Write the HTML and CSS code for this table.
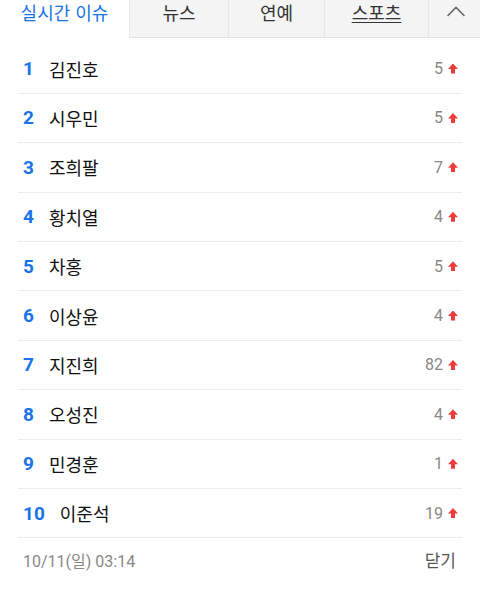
FILE: index.html
```html
<!DOCTYPE html>
<html lang="ko">
<head>
  <meta charset="UTF-8">
  <title>실시간 이슈</title>
  <link rel="stylesheet" href="styles.css">
</head>
<body>
  <div class="tabs">
    <div class="tab active">실시간 이슈</div>
    <div class="tab t-news">뉴스</div>
    <div class="tab t-ent">연예</div>
    <div class="tab t-sport"><span class="under">스포츠</span></div>
    <div class="tab t-fold">
      <svg width="20" height="11" viewBox="0 0 20 11"><polyline points="1.5,10 10,1.5 18.5,10" fill="none" stroke="#666" stroke-width="1.6"/></svg>
    </div>
  </div>

  <ul class="ranks">
    <li><span class="num">1</span><span class="name">김진호</span><span class="cnt">5</span><span class="up"></span></li>
    <li><span class="num">2</span><span class="name">시우민</span><span class="cnt">5</span><span class="up"></span></li>
    <li><span class="num">3</span><span class="name">조희팔</span><span class="cnt">7</span><span class="up"></span></li>
    <li><span class="num">4</span><span class="name">황치열</span><span class="cnt">4</span><span class="up"></span></li>
    <li><span class="num">5</span><span class="name">차홍</span><span class="cnt">5</span><span class="up"></span></li>
    <li><span class="num">6</span><span class="name">이상윤</span><span class="cnt">4</span><span class="up"></span></li>
    <li><span class="num">7</span><span class="name">지진희</span><span class="cnt">82</span><span class="up"></span></li>
    <li><span class="num">8</span><span class="name">오성진</span><span class="cnt">4</span><span class="up"></span></li>
    <li><span class="num">9</span><span class="name">민경훈</span><span class="cnt">1</span><span class="up"></span></li>
    <li><span class="num">10</span><span class="name">이준석</span><span class="cnt">19</span><span class="up"></span></li>
  </ul>

  <div class="foot">
    <span class="date">10/11(일) 03:14</span>
    <span class="close">닫기</span>
  </div>
</body>
</html>
```

FILE: styles.css
```css
body {
  margin: 0;
  font-family: "Noto Sans CJK KR", "Noto Sans", Roboto, sans-serif;
  background: #fff;
  color: #111;
}
.tabs {
  display: flex;
  height: 38px;
}
.tab {
  box-sizing: border-box;
  height: 38px;
  line-height: 24px;
  text-align: center;
  font-size: 18px;
  color: #333;
  background: #f4f4f4;
  border-left: 1px solid #e6e6e6;
  border-bottom: 1px solid #e2e2e2;
}
.tab.active {
  width: 129px;
  background: #fff;
  color: #1a73e8;
  border-left: none;
  border-bottom: none;
}
.t-news { width: 99px; }
.t-ent { width: 96px; }
.t-sport { width: 104px; }
.t-fold {
  width: 52px;
  display: flex;
  justify-content: center;
  padding-top: 6px;
  padding-left: 3px;
}
.under {
  text-decoration: underline;
  text-underline-offset: 2px;
  text-decoration-thickness: 1px;
}
.ranks {
  list-style: none;
  margin: 0 18px;
  padding: 6.4px 0 0;
}
.ranks li {
  box-sizing: border-box;
  height: 49.4px;
  display: flex;
  align-items: center;
  border-bottom: 1px solid #ececec;
  padding: 0 4px 0 5px;
}
.num {
  font-family: Roboto, sans-serif;
  font-weight: bold;
  font-size: 19px;
  color: #1a73e8;
  margin-right: 15px;
}
.name {
  font-size: 18px;
  flex: 1;
}
.cnt {
  font-family: Roboto, sans-serif;
  font-size: 16px;
  color: #888;
  margin-right: 5px;
}
.up {
  width: 10px;
  height: 10px;
  background: #ee3b3b;
  clip-path: polygon(50% 0, 100% 55%, 70% 55%, 70% 100%, 30% 100%, 30% 55%, 0 55%);
}
.foot {
  display: flex;
  justify-content: space-between;
  align-items: center;
  margin: 0 18px;
  padding: 9px 6px 0 5px;
}
.date {
  font-family: Roboto, "Noto Sans CJK KR", sans-serif;
  font-size: 16px;
  color: #888;
}
.close {
  font-size: 17px;
  color: #555;
}
```
